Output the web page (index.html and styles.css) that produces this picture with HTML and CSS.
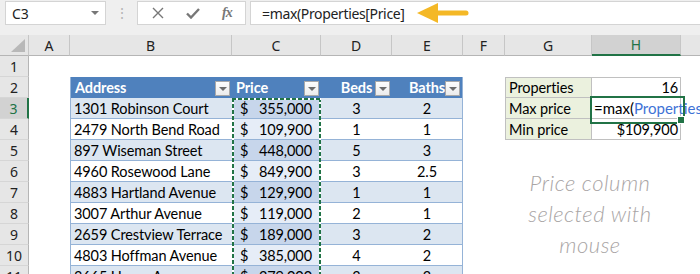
FILE: index.html
```html
<!DOCTYPE html>
<html lang="en">
  <head>
    <meta charset="UTF-8" />
    <title>Max price - structured reference</title>
    <link rel="stylesheet" href="styles.css">
  </head>
  <body>
    <!-- formula bar -->
    <div class="toolbar">
      <div class="namebox">
        <span>C3</span>
        <span class="nb-arrow"></span>
      </div>
      <div class="grip">⋮</div>
      <div class="fbtns">
        <svg class="ico" width="12" height="12" viewBox="0 0 12 12"><path d="M1 1L11 11M11 1L1 11" stroke="#777" stroke-width="1.4" fill="none"/></svg>
        <svg class="ico" width="14" height="12" viewBox="0 0 14 12"><path d="M1 6.5L5 10.5L13 2" stroke="#777" stroke-width="2.4" fill="none"/></svg>
        <span class="fx">fx</span>
      </div>
      <div class="formula">
        <span>=max(Properties[Price]</span>
        <svg class="arrow" width="52" height="22" viewBox="0 0 52 22">
          <path d="M0 11L21 1V21Z" fill="#f4b826"/>
          <path d="M19 11H49" stroke="#f4b826" stroke-width="5" stroke-linecap="round"/>
        </svg>
      </div>
    </div>

    <!-- worksheet -->
    <div class="sheet">
      <div class="ch corner"><svg width="14" height="13" viewBox="0 0 14 13"><path d="M14 0V13H0Z" fill="#b8b8b8"/></svg></div>
      <div class="ch">A</div>
      <div class="ch">B</div>
      <div class="ch">C</div>
      <div class="ch">D</div>
      <div class="ch">E</div>
      <div class="ch">F</div>
      <div class="ch">G</div>
      <div class="ch sel">H</div>
      <div class="ch last"></div>

      <div class="rh">1</div>
      <div></div><div></div><div></div><div></div><div></div><div></div><div></div><div></div><div></div>

      <div class="rh">2</div>
      <div></div>
      <div class="th edge-l">Address<span class="filter"></span></div>
      <div class="th">Price<span class="filter"></span></div>
      <div class="th mid">Beds<span class="filter"></span></div>
      <div class="th mid edge-r">Baths<span class="filter"></span></div>
      <div></div>
      <div class="lbl top">Properties</div>
      <div class="val top">16</div>
      <div></div>

      <div class="rh sel">3</div>
      <div></div>
      <div class="td band edge-l">1301 Robinson Court</div>
      <div class="td band price"><span>$</span><span>355,000</span></div>
      <div class="td band mid">3</div>
      <div class="td band mid edge-r">2</div>
      <div></div>
      <div class="lbl">Max price</div>
      <div class="val active">=max(<span class="ref">Properties</span></div>
      <div></div>

      <div class="rh">4</div>
      <div></div>
      <div class="td edge-l">2479 North Bend Road</div>
      <div class="td price"><span>$</span><span>109,900</span></div>
      <div class="td mid">1</div>
      <div class="td mid edge-r">1</div>
      <div></div>
      <div class="lbl">Min price</div>
      <div class="val">$109,900</div>
      <div></div>

      <div class="rh">5</div>
      <div></div>
      <div class="td band edge-l">897 Wiseman Street</div>
      <div class="td band price"><span>$</span><span>448,000</span></div>
      <div class="td band mid">5</div>
      <div class="td band mid edge-r">3</div>
      <div></div><div></div><div></div><div></div>

      <div class="rh">6</div>
      <div></div>
      <div class="td edge-l">4960 Rosewood Lane</div>
      <div class="td price"><span>$</span><span>849,900</span></div>
      <div class="td mid">3</div>
      <div class="td mid edge-r">2.5</div>
      <div></div><div></div><div></div><div></div>

      <div class="rh">7</div>
      <div></div>
      <div class="td band edge-l">4883 Hartland Avenue</div>
      <div class="td band price"><span>$</span><span>129,900</span></div>
      <div class="td band mid">1</div>
      <div class="td band mid edge-r">1</div>
      <div></div><div></div><div></div><div></div>

      <div class="rh">8</div>
      <div></div>
      <div class="td edge-l">3007 Arthur Avenue</div>
      <div class="td price"><span>$</span><span>119,000</span></div>
      <div class="td mid">2</div>
      <div class="td mid edge-r">1</div>
      <div></div><div></div><div></div><div></div>

      <div class="rh">9</div>
      <div></div>
      <div class="td band edge-l">2659 Crestview Terrace</div>
      <div class="td band price"><span>$</span><span>189,000</span></div>
      <div class="td band mid">3</div>
      <div class="td band mid edge-r">2</div>
      <div></div><div></div><div></div><div></div>

      <div class="rh">10</div>
      <div></div>
      <div class="td edge-l">4803 Hoffman Avenue</div>
      <div class="td price"><span>$</span><span>385,000</span></div>
      <div class="td mid">4</div>
      <div class="td mid edge-r">2</div>
      <div></div><div></div><div></div><div></div>

      <div class="rh">11</div>
      <div></div>
      <div class="td band edge-l">3665 Hayes Avenue</div>
      <div class="td band price"><span>$</span><span>279,000</span></div>
      <div class="td band mid">3</div>
      <div class="td band mid edge-r">2</div>
      <div></div><div></div><div></div><div></div>

      <!-- reference marquee around Properties[Price] -->
      <div class="marquee"></div>

      <div class="note">Price column<br>selected with<br>mouse</div>
    </div>
  </body>
</html>
```

FILE: styles.css
```css
:root {
  --xl-green: #217346;
  --head-bg: #e6e6e6;
  --head-line: #c6c6c6;
  --tbl-head: #4f81bd;
  --tbl-band: #dce6f1;
  --tbl-line: #95b3d7;
  --cell-line: #c0c0c0;
}
* {
  margin: 0;
  padding: 0;
  box-sizing: border-box;
}
body {
  width: 700px;
  height: 274px;
  overflow: hidden;
  background: #fff;
  font-family: "Lato", "Open Sans", sans-serif;
  color: #000;
}

/* formula bar */
.toolbar {
  height: 35px;
  background: #efefef;
  display: flex;
  align-items: flex-start;
  padding: 1px 0 0 5px;
  font-family: "Noto Sans", "Open Sans", sans-serif;
}
.namebox,
.fbtns,
.formula {
  height: 24px;
  background: #fff;
  border: 1px solid #d4d4d4;
  display: flex;
  align-items: center;
}
.namebox {
  width: 101px;
  padding: 0 6px;
  justify-content: space-between;
  font-size: 14px;
  color: #222;
}
.nb-arrow {
  width: 0;
  height: 0;
  border-left: 4px solid transparent;
  border-right: 4px solid transparent;
  border-top: 4px solid #777;
}
.grip {
  width: 31px;
  text-align: center;
  color: #b5b5b5;
  font-size: 14px;
  line-height: 24px;
}
.fbtns {
  width: 109px;
  padding-left: 14px;
  gap: 22px;
}
.fx {
  font-family: "Liberation Serif", serif;
  font-style: italic;
  font-weight: bold;
  font-size: 14px;
  color: #777;
  letter-spacing: -1px;
}
.formula {
  flex: 1;
  margin-left: 4px;
  border-right: none;
  padding-left: 11px;
  font-size: 14px;
  letter-spacing: -0.35px;
  color: #222;
  gap: 12px;
}

/* worksheet grid */
.sheet {
  position: relative;
  display: grid;
  grid-template-columns: 29px 41px 162px 89px 71px 71px 42px 87px 89px 1fr;
  grid-auto-rows: 21px;
  font-size: 14.5px;
  letter-spacing: -0.1px;
}
.sheet > div {
  display: flex;
  align-items: center;
  white-space: nowrap;
  min-width: 0;
}
.ch {
  background: var(--head-bg);
  border-right: 1px solid var(--head-line);
  border-bottom: 1px solid #b5b5b5;
  justify-content: center;
  font-family: "Noto Sans", "Open Sans", sans-serif;
  font-size: 14px;
  letter-spacing: 0;
  color: #222;
}
.ch.last {
  border-right: none;
}
.corner {
  align-items: flex-end !important;
  justify-content: flex-end !important;
  padding: 0 3px 3px 0;
}
.ch.sel {
  background: #d2d2d2;
  color: var(--xl-green);
  border-bottom: 2px solid var(--xl-green);
}
.rh {
  background: var(--head-bg);
  border-right: 1px solid #b5b5b5;
  border-bottom: 1px solid #d6d6d6;
  justify-content: center;
  font-family: "Noto Sans", "Open Sans", sans-serif;
  font-size: 14px;
  letter-spacing: 0;
  color: #222;
}
.rh.sel {
  background: #d2d2d2;
  color: var(--xl-green);
  border-right: 2px solid var(--xl-green);
}

/* Properties table */
.th {
  position: relative;
  background: var(--tbl-head);
  color: #fff;
  font-weight: bold;
  padding-left: 4px;
}
.td {
  border-bottom: 1px solid var(--tbl-line);
  padding-left: 3px;
}
.band {
  background: var(--tbl-band);
}
.mid {
  justify-content: center;
  padding-left: 0 !important;
}
.edge-l {
  border-left: 1px solid var(--tbl-line);
}
.edge-r {
  border-right: 1px solid var(--tbl-line);
}
.price {
  justify-content: space-between;
  padding: 0 9px 0 8px;
  background: #e6edf7;
}
.price.band {
  background: #c7d6eb;
}
.filter {
  position: absolute;
  right: 2px;
  top: 4px;
  width: 15px;
  height: 15px;
  background: linear-gradient(#fdfdfd, #ececec);
  border: 1px solid #a9a9a9;
}
.filter::after {
  content: "";
  position: absolute;
  left: 3px;
  top: 5px;
  border-left: 4px solid transparent;
  border-right: 4px solid transparent;
  border-top: 4px solid #6d6d6d;
}

/* summary block */
.lbl,
.val {
  border-right: 1px solid var(--cell-line);
  border-bottom: 1px solid var(--cell-line);
}
.lbl {
  background: #ebf1de;
  border-left: 1px solid var(--cell-line);
  padding-left: 3px;
}
.val {
  justify-content: flex-end;
  padding-right: 2px;
}
.top {
  border-top: 1px solid var(--cell-line);
}
.sheet > .val.active {
  display: block;
  position: relative;
  z-index: 2;
  padding-left: 2px;
  overflow: visible;
  font-size: 15px;
  line-height: 20px;
  letter-spacing: 0;
}
.val.active::before {
  content: "";
  position: absolute;
  left: -2px;
  top: -2px;
  width: 91px;
  height: 24px;
  border: 2px solid var(--xl-green);
}
.val.active::after {
  content: "";
  position: absolute;
  left: 85px;
  top: 18px;
  width: 6px;
  height: 6px;
  background: var(--xl-green);
  border: 1px solid #fff;
}
.ref {
  color: #3e72d6;
}

.marquee {
  position: absolute;
  left: 232px;
  top: 63px;
  width: 89px;
  height: 260px;
  background:
    repeating-linear-gradient(90deg, var(--xl-green) 0 4px, #fff 4px 6px) top / 100% 2px no-repeat,
    repeating-linear-gradient(180deg, var(--xl-green) 0 4px, #fff 4px 6px) left / 2px 100% no-repeat,
    repeating-linear-gradient(180deg, var(--xl-green) 0 4px, #fff 4px 6px) right / 2px 100% no-repeat;
}

.note {
  position: absolute;
  left: 505px;
  top: 132px;
  width: 170px;
  display: block !important;
  text-align: center;
  font-family: "Lato", sans-serif;
  font-style: italic;
  font-weight: 300;
  font-size: 22px;
  line-height: 31px;
  color: #a9a5a5;
  letter-spacing: 0.5px;
}
```
